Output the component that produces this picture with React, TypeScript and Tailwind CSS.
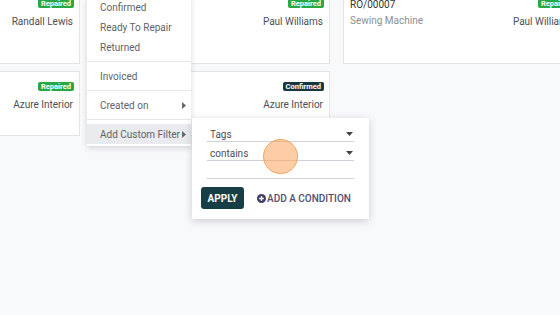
const font = { fontFamily: "Roboto, 'Noto Sans', sans-serif" };

function Badge({ label, dark = false }: { label: string; dark?: boolean }) {
  return (
    <span
      className={
        "-mr-[1px] inline-block whitespace-nowrap rounded-[2px] px-[3px] text-[7.5px] font-bold leading-[9px] text-white " +
        (dark ? "bg-[#17363d]" : "bg-[#28a745]")
      }
    >
      {label}
    </span>
  );
}

function Card({
  title,
  subtitle,
  badge,
  dark,
  name,
  tall,
}: {
  title?: string;
  subtitle?: string;
  badge: string;
  dark?: boolean;
  name: string;
  tall?: boolean;
}) {
  return (
    <div
      className={
        "flex justify-between whitespace-nowrap border border-[#e2e4e8] bg-white px-[6px] " +
        (tall ? "h-[77px] pt-[11px]" : "h-[65px] pt-[10px]")
      }
    >
      <div className="flex flex-col">
        <span className="-mt-[1px] text-[10px] leading-[13px] text-[#333]">{title}</span>
        <span className="mt-[3px] text-[10px] leading-[13px] text-[#8a8f96]">{subtitle}</span>
      </div>
      <div className="flex flex-col items-end">
        <Badge label={badge} dark={dark} />
        <span className="mt-[7px] text-[10px] leading-[13px] text-[#4b4f55]">{name}</span>
      </div>
    </div>
  );
}

function Item({ label, sub, active }: { label: string; sub?: boolean; active?: boolean }) {
  return (
    <div
      className={
        "flex h-[20px] items-center justify-between whitespace-nowrap pl-[13px] pr-[5px] text-[10px] text-[#5f6368] " +
        (active ? "bg-[#e9ebee]" : "")
      }
    >
      <span>{label}</span>
      {sub && (
        <svg width="4" height="7" viewBox="0 0 4 7">
          <path d="M0 0 L4 3.5 L0 7 Z" fill="#666" />
        </svg>
      )}
    </div>
  );
}

function Sep() {
  return <div className="my-[4px] h-px bg-[#e6e7ea]" />;
}

function Select({ label }: { label: string }) {
  return (
    <div className="flex h-[19px] items-end justify-between border-b border-[#cfd2d6] pl-[3px] pr-[1px] text-[10px] leading-[13px] text-[#4b4f55]">
      <span>{label}</span>
      <svg width="7" height="4" viewBox="0 0 7 4" className="mb-[5px]">
        <path d="M0 0 L7 0 L3.5 4 Z" fill="#444" />
      </svg>
    </div>
  );
}

export default function App() {
  return (
    <div className="relative h-[315px] w-[560px] overflow-hidden bg-[#f8f9fa]" style={font}>
      <div className="-ml-[157px] -mt-[13px] grid w-[750px] grid-cols-[237px_237px_237px] gap-x-[13px] gap-y-[7px]">
        <Card tall badge="Repaired" name="Randall Lewis" />
        <Card tall badge="Repaired" name="Paul Williams" />
        <Card tall title="RO/00007" subtitle="Sewing Machine" badge="Repaired" name="Paul Williams" />
        <Card badge="Repaired" name="Azure Interior" />
        <Card badge="Confirmed" dark name="Azure Interior" />
      </div>

      {/* filters dropdown */}
      <div className="absolute left-[87px] top-[-3px] w-[104px] bg-white pb-[2px] shadow-[0_2px_6px_rgba(0,0,0,0.15)]">
        <Item label="Confirmed" />
        <Item label="Ready To Repair" />
        <Item label="Returned" />
        <Sep />
        <Item label="Invoiced" />
        <Sep />
        <Item label="Created on" sub />
        <Sep />
        <Item label="Add Custom Filter" sub active />
      </div>

      {/* custom filter popup */}
      <div className="absolute left-[192px] top-[118px] flex h-[101px] w-[177px] flex-col bg-white px-[15px] pt-[5px] shadow-[0_2px_8px_rgba(0,0,0,0.18)]">
        <Select label="Tags" />
        <Select label="contains" />
        <div className="h-[18px] border-b border-[#cfd2d6]" />
        <div className="-ml-[6px] mt-[8px] flex items-center gap-[13px] whitespace-nowrap">
          <button className="h-[22px] w-[43px] rounded-[3px] bg-[#173e45] text-[10px] font-bold text-white">
            APPLY
          </button>
          <span className="flex items-center text-[10px] font-medium text-[#4f4f72]">
            <svg width="9" height="9" viewBox="0 0 10 10" className="mr-[1px]">
              <circle cx="5" cy="5" r="5" fill="#3f3d6a" />
              <path d="M5 2.4 V7.6 M2.4 5 H7.6" stroke="white" strokeWidth="1.6" />
            </svg>
            ADD A CONDITION
          </span>
        </div>
      </div>

      {/* click marker */}
      <div className="absolute left-[263px] top-[139px] h-[35px] w-[35px] rounded-full border border-[#f5a45d] bg-[#fba65c]/55" />
    </div>
  );
}
